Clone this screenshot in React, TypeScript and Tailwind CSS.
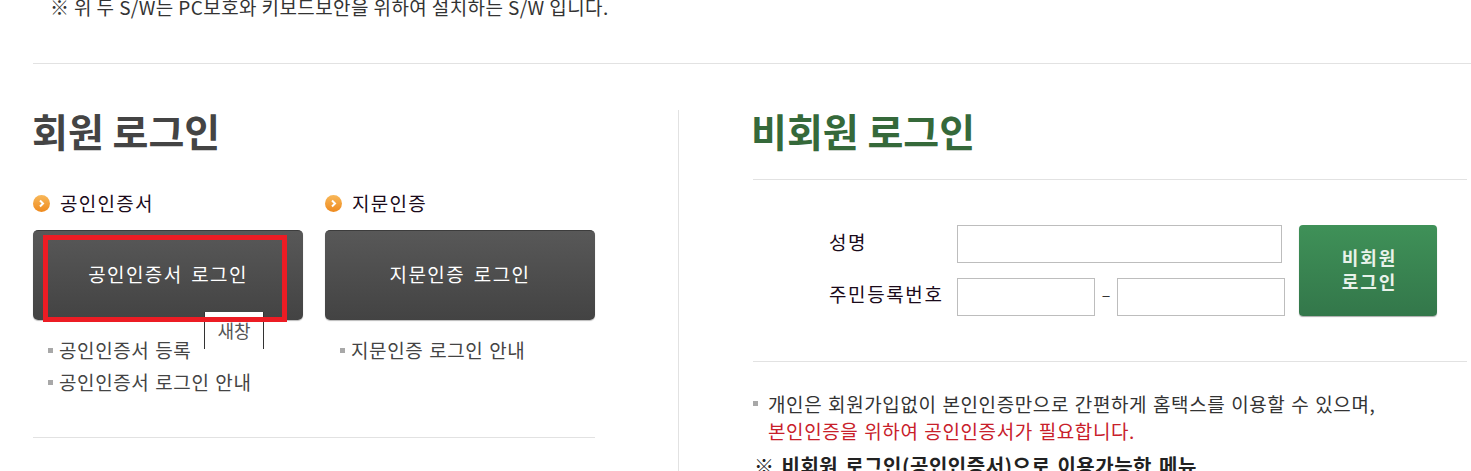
const font = { fontFamily: '"Noto Sans CJK KR", "Liberation Sans", sans-serif' };

function OrangeBullet() {
  return (
    <svg width="17" height="17" viewBox="0 0 17 17" className="shrink-0">
      <defs>
        <linearGradient id="og" x1="0" y1="0" x2="0" y2="1">
          <stop offset="0" stopColor="#f8b85a" />
          <stop offset="1" stopColor="#ee8a1e" />
        </linearGradient>
      </defs>
      <circle cx="8.5" cy="8.5" r="8.5" fill="url(#og)" />
      <path d="M7 5.5 L10 8.5 L7 11.5" fill="none" stroke="#fff" strokeWidth="2" />
    </svg>
  );
}

function Sq() {
  return <span className="inline-block w-[5px] h-[5px] bg-[#a8a8a8] shrink-0" />;
}

function LoginBtn({ label }: { label: string }) {
  return (
    <div className="h-[90px] rounded-[5px] bg-gradient-to-b from-[#585858] to-[#434343] border-t border-t-[#3c3c3c] shadow-[0_1px_1px_#bbb] flex items-center justify-center text-white text-[19px] tracking-[1.4px] [word-spacing:3px] pb-[3px]">
      {label}
    </div>
  );
}

export default function App() {
  return (
    <div style={font} className="w-[1471px] h-[471px] overflow-hidden bg-white relative">
      <div className="h-[64px] ml-[33px] border-b border-[#e2e2e2]">
        <p className="pl-[17px] h-[14px] leading-[14px] text-[19px] text-[#333] tracking-[0.4px] whitespace-nowrap">
          ※ 위 두 S/W는 PC보호와 키보드보안을 위하여 설치하는 S/W 입니다.
        </p>
      </div>

      <div className="flex">
        {/* left */}
        <div className="w-[678px] pl-[33px] shrink-0">
          <h2 className="mt-[38px] -ml-[1px] h-[56px] leading-[56px] text-[39px] font-bold text-[#444] whitespace-nowrap">
            회원 로그인
          </h2>
          <div className="w-[562px] mt-[33px] h-[247px] border-b border-[#e2e2e2] flex gap-[22px] relative">
            <div className="w-[270px]">
              <div className="flex items-center gap-[10px] h-[24px] text-[19px] tracking-[1.3px] text-[#1a0a1a]">
                <OrangeBullet />
                공인인증서
              </div>
              <div className="mt-[15px] relative">
                <LoginBtn label="공인인증서 로그인" />
              </div>
              <ul className="mt-[14px] pl-[15px] text-[19px] tracking-[0.6px] [word-spacing:1px] text-[#444]">
                <li className="h-[33px] flex items-center gap-[6px] whitespace-nowrap"><Sq />공인인증서 등록</li>
                <li className="h-[31px] flex items-center gap-[6px] whitespace-nowrap"><Sq />공인인증서 로그인 안내</li>
              </ul>
              {/* highlight overlays */}
              <div className="absolute left-[171px] top-[121px] w-[60px] h-[37px] border-x border-[#333] flex justify-center text-[18px] text-[#555] leading-[20px] pt-[8px]">
                <span className="absolute left-0 right-0 top-0 h-[5px] bg-white" />
                새창
              </div>
              <div className="absolute left-[10px] top-[44px] w-[244px] h-[87px] border-[5px] border-[#ec1c24]" />
            </div>
            <div className="w-[270px]">
              <div className="flex items-center gap-[10px] h-[24px] text-[19px] tracking-[1.3px] text-[#1a0a1a]">
                <OrangeBullet />
                지문인증
              </div>
              <div className="mt-[15px]">
                <LoginBtn label="지문인증 로그인" />
              </div>
              <ul className="mt-[14px] pl-[15px] text-[19px] tracking-[0.6px] [word-spacing:1px] text-[#444]">
                <li className="h-[33px] flex items-center gap-[6px] whitespace-nowrap"><Sq />지문인증 로그인 안내</li>
              </ul>
            </div>
          </div>
        </div>

        {/* vertical divider */}
        <div className="mt-[46px] w-px h-[400px] bg-[#e2e2e2] shrink-0" />

        {/* right */}
        <div className="ml-[74px] w-[714px] shrink-0">
          <h2 className="mt-[38px] -ml-[2px] h-[56px] leading-[56px] text-[39px] font-bold text-[#35693a] whitespace-nowrap">
            비회원 로그인
          </h2>
          <div className="mt-[21px] border-t border-[#e2e2e2] h-[183px] border-b flex pl-[76px] pt-[45px]">
            <div className="w-[128px] text-[19px] tracking-[1.6px] text-[#1a0a1a]">
              <div className="h-[34px] flex items-center">성명</div>
              <div className="mt-[18px] h-[34px] flex items-center whitespace-nowrap">주민등록번호</div>
            </div>
            <div className="w-[328px]">
              <input className="block w-[325px] h-[38px] border border-[#bdbdbd]" />
              <div className="flex items-center mt-[15px]">
                <input className="block w-[138px] h-[38px] border border-[#bdbdbd]" />
                <span className="w-[22px] text-center text-[16px] leading-[16px] pb-[6px] text-[#333]">–</span>
                <input className="block w-[168px] h-[38px] border border-[#bdbdbd]" />
              </div>
            </div>
            <div className="ml-[14px] w-[138px] h-[91px] pb-[4px] pl-[3px] rounded-[4px] bg-gradient-to-b from-[#3f9158] to-[#33774a] shadow-[0_1px_1px_#aaa] flex flex-col items-center justify-center text-[#e8f2ea] text-[18px] font-bold leading-[24px] tracking-[2px]">
              <span>비회원</span>
              <span>로그인</span>
            </div>
          </div>
          <div className="mt-[28px] text-[19px] leading-[27px] tracking-[0.6px] [word-spacing:1px]">
            <p className="flex items-center gap-[10px] text-[#333] whitespace-nowrap"><Sq />개인은 회원가입없이 본인인증만으로 간편하게 홈택스를 이용할 수 있으며,</p>
            <p className="pl-[15px] text-[#c8202a] whitespace-nowrap">본인인증을 위하여 공인인증서가 필요합니다.</p>
            <p className="mt-[8px] pl-[1px] font-bold text-[20px] tracking-[0.5px] [word-spacing:2px] text-[#222] whitespace-nowrap">※ 비회원 로그인(공인인증서)으로 이용가능한 메뉴</p>
          </div>
        </div>
      </div>
    </div>
  );
}
